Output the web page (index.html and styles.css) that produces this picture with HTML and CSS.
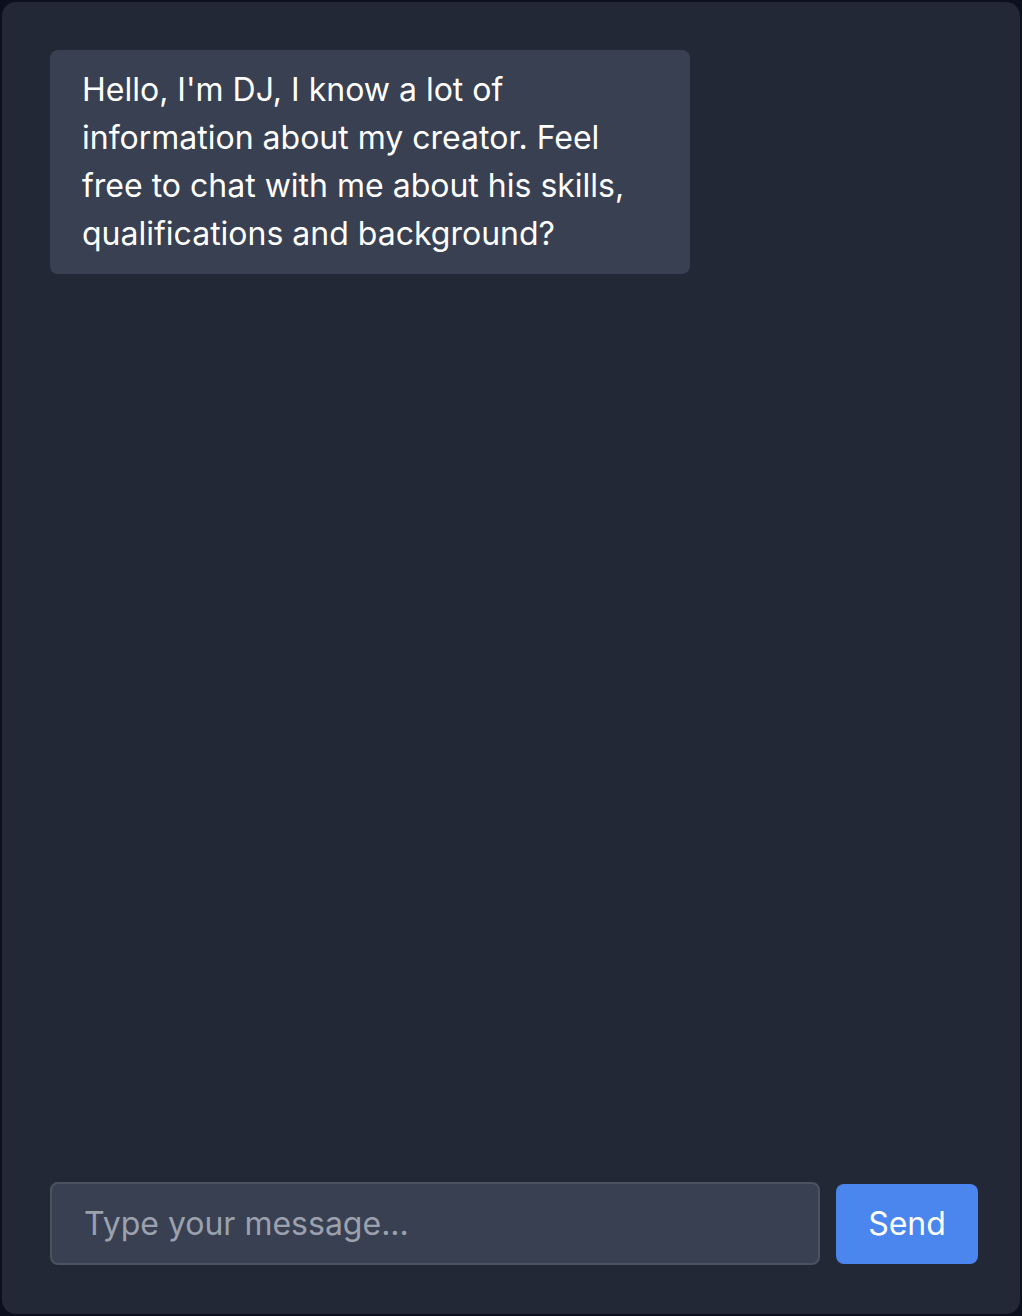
FILE: index.html
```html
<!DOCTYPE html>
<html>
<head>
<meta charset="utf-8">
<link rel="stylesheet" href="styles.css">
</head>
<body>
<div class="chat">
  <div class="messages">
    <div class="bubble">Hello, I'm DJ, I know a lot of information about my creator. Feel free to chat with me about his skills, qualifications and background?</div>
  </div>
  <form class="composer">
    <input class="input" type="text" placeholder="Type your message...">
    <button class="send" type="button">Send</button>
  </form>
</div>
</body>
</html>
```
FILE: styles.css
```css
html, body {
  margin: 0;
  padding: 0;
  height: 100%;
}
body {
  background: #0c0f1d;
  padding: 2px;
  box-sizing: border-box;
  font-family: Inter, "Noto Sans", sans-serif;
}
.chat {
  height: 100%;
  box-sizing: border-box;
  background: #222836;
  border-radius: 14px;
  padding: 48px 42px 49px 48px;
  display: flex;
  flex-direction: column;
}
.messages {
  flex: 1;
}
.bubble {
  width: 640px;
  box-sizing: border-box;
  background: #394051;
  color: #ffffff;
  border-radius: 8px;
  padding: 16px 32px;
  font-size: 32px;
  line-height: 48px;
}
.composer {
  display: flex;
  gap: 16px;
  align-items: center;
  margin: 0;
}
.input {
  flex: 1;
  height: 83px;
  box-sizing: border-box;
  background: #394051;
  border: 2px solid #4b5361;
  border-radius: 8px;
  padding: 0 32px;
  font-family: inherit;
  font-size: 32px;
  color: #ffffff;
  outline: none;
}
.input::placeholder {
  color: #9ba1ad;
}
.send {
  height: 80px;
  width: 142px;
  background: #4a86ee;
  color: #ffffff;
  border: none;
  border-radius: 8px;
  font-family: inherit;
  font-size: 32px;
  padding: 0;
}
```
